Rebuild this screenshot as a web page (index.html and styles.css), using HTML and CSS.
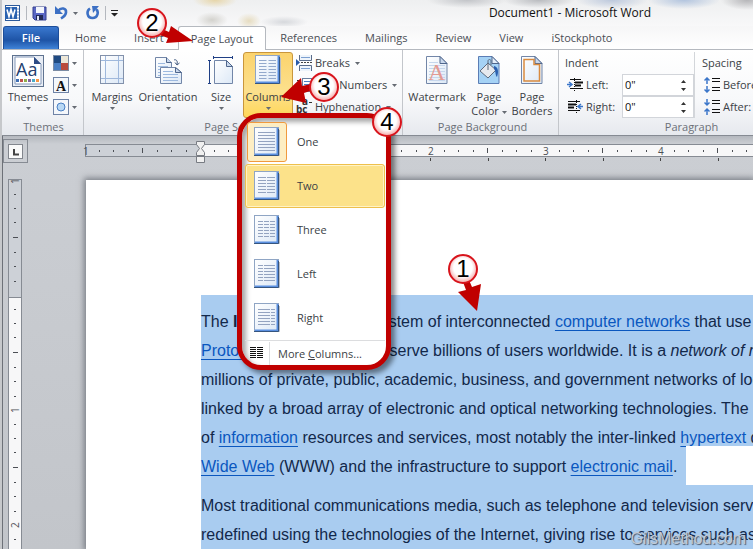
FILE: index.html
```html
<!DOCTYPE html>
<html lang="en">

<head>
    <meta charset="UTF-8">
    <meta name="viewport" content="width=device-width, initial-scale=1.0">
    <title>Document1 - Microsoft Word</title>
    <link rel="stylesheet" href="styles.css">
</head>

<body>
    <!-- Shared icon shapes -->
    <svg class="defs" width="0" height="0" aria-hidden="true">
        <defs>
            <linearGradient id="paper" x1="0" y1="0" x2="1" y2="1">
                <stop offset="0" stop-color="#fff" />
                <stop offset="1" stop-color="#dce8f6" />
            </linearGradient>
            <radialGradient id="badge" cx="0.5" cy="0.45" r="0.55">
                <stop offset="0.6" stop-color="#fff" />
                <stop offset="1" stop-color="#f3a3a3" />
            </radialGradient>
            <symbol id="caret" viewBox="0 0 5 3">
                <path d="M0 0h5L2.500 3z" fill="#666b73" />
            </symbol>
            <symbol id="sheet" viewBox="0 0 26 30">
                <path d="M2 28.500H25.500V3" fill="none" stroke="#b9bdc4" />
                <rect x="0.500" y="0.500" width="24" height="28" fill="url(#paper)" stroke="#8fa5c4" />
                <path d="M1 27.500H23.500V1" fill="none" stroke="#5a8fe0" stroke-width="2" />
                <path d="M0 28.500H24.500V2" fill="none" stroke="#35557f" />
            </symbol>
            <symbol id="folded" viewBox="0 0 24 30">
                <path d="M1.500 1.500H15l7 7V28.500H1.500z" fill="url(#paper)" stroke="#7286a8" />
                <path d="M15 1.500v7h7z" fill="#c9d8ec" stroke="#4f668c" />
            </symbol>
        </defs>
    </svg>

    <div class="window">
        <header class="titlebar">
            <div class="quick-access">
                <svg width="17" height="17" viewBox="0 0 17 17">
                    <rect x="1.500" y="0.500" width="14" height="15" fill="#fff" stroke="#2c5a9b" />
                    <rect x="1" y="2" width="12" height="12" fill="#2a62b0" />
                    <path d="M3 4.500l2 7 2-7 2 7 2-7" fill="none" stroke="#fff" stroke-width="1.600" />
                    <path d="M13 4h2M13 7h2M13 10h2M13 13h2" stroke="#7a9acb" />
                </svg>
                <span class="divider"></span>
                <button type="button" aria-label="Save">
                    <svg width="15" height="15" viewBox="0 0 15 15">
                        <path d="M1 1h13v13H3l-2-2z" fill="#5a67c4" stroke="#34408f" />
                        <rect x="4" y="1" width="8" height="6" fill="#f2f5fc" />
                        <rect x="4" y="9" width="7" height="5" fill="#222a55" />
                        <rect x="5" y="10" width="2" height="4" fill="#dfe4f5" />
                    </svg>
                </button>
                <button type="button" class="undo" aria-label="Undo">
                    <svg width="13" height="14" viewBox="0 0 13 14">
                        <path d="M3 5C6 1 11.500 2 11 6.500c-.300 3-2.500 4.500-5 6" fill="none" stroke="#3c70c4" stroke-width="2.600" />
                        <path d="M0 0v8h8z" fill="#3c70c4" />
                    </svg>
                    <svg width="5" height="3"><use href="#caret" /></svg>
                </button>
                <button type="button" aria-label="Repeat">
                    <svg width="14" height="14" viewBox="0 0 14 14">
                        <path d="M4 2.500C0 5 1 12 6.500 12S13 5 10 3.500" fill="none" stroke="#3c70c4" stroke-width="2.600" />
                        <path d="M6 0h7L7 7z" fill="#3c70c4" />
                    </svg>
                </button>
                <span class="divider"></span>
                <button type="button" aria-label="Customize Quick Access Toolbar">
                    <svg width="7" height="7" viewBox="0 0 7 7"><path d="M0 0h7v1H0zM0 3h7L3.500 6.500z" fill="#222" /></svg>
                </button>
            </div>
            <h1 class="title">Document1 - Microsoft Word</h1>
        </header>

        <nav class="tabs">
            <button type="button" class="tab file">File</button>
            <button type="button" class="tab">Home</button>
            <button type="button" class="tab">Insert</button>
            <button type="button" class="tab active">Page Layout</button>
            <button type="button" class="tab">References</button>
            <button type="button" class="tab">Mailings</button>
            <button type="button" class="tab">Review</button>
            <button type="button" class="tab">View</button>
            <button type="button" class="tab">iStockphoto</button>
        </nav>

        <div class="ribbon">
            <!-- Themes -->
            <section class="group themes">
                <div class="group-body">
                    <button type="button" class="big">
                        <svg width="32" height="32" viewBox="0 0 32 32">
                            <rect x="0.500" y="0.500" width="31" height="31" fill="#e8edf5" stroke="#5f7390" />
                            <path d="M3 2h19l7 7v20H3z" fill="#fff" stroke="#8498b8" />
                            <path d="M22 2v7h7z" fill="#2d4c86" />
                            <text x="4" y="21" class="aa">Aa</text>
                            <path d="M4 24h3v3H4z" fill="#3f6fb5" />
                            <path d="M8 24h3v3H8z" fill="#c0504d" />
                            <path d="M12 24h3v3h-3z" fill="#8fae4b" />
                            <path d="M16 24h3v3h-3z" fill="#7f63a1" />
                            <path d="M20 24h3v3h-3z" fill="#4bacc6" />
                            <path d="M24 24h3v3h-3z" fill="#f79646" />
                        </svg>
                        <span>Themes</span>
                        <svg width="5" height="3"><use href="#caret" /></svg>
                    </button>
                    <div class="stack">
                        <button type="button" class="small" aria-label="Theme Colors">
                            <svg width="16" height="16" viewBox="0 0 16 16">
                                <rect width="16" height="16" fill="#7b8ba3" />
                                <path d="M1 1h7v7H1z" fill="#1f4a82" /><path d="M8 1h7v7H8z" fill="#ece7d8" />
                                <path d="M1 8h7v7H1z" fill="#4a7fc4" /><path d="M8 8h7v7H8z" fill="#b94a3c" />
                            </svg>
                            <svg width="5" height="3"><use href="#caret" /></svg>
                        </button>
                        <button type="button" class="small" aria-label="Theme Fonts">
                            <svg width="16" height="16" viewBox="0 0 16 16">
                                <rect x="0.500" y="0.500" width="15" height="15" fill="#f4f7fb" stroke="#6f83a6" />
                                <text x="3" y="14" class="letter">A</text>
                            </svg>
                            <svg width="5" height="3"><use href="#caret" /></svg>
                        </button>
                        <button type="button" class="small" aria-label="Theme Effects">
                            <svg width="16" height="16" viewBox="0 0 16 16">
                                <rect x="0.500" y="0.500" width="15" height="15" fill="#f4f7fb" stroke="#6f83a6" />
                                <circle cx="8" cy="8" r="4" fill="#b8d8f5" stroke="#4a7fc4" />
                            </svg>
                            <svg width="5" height="3"><use href="#caret" /></svg>
                        </button>
                    </div>
                </div>
                <h2>Themes</h2>
            </section>

            <!-- Page Setup -->
            <section class="group setup">
                <div class="group-body">
                    <button type="button" class="big margins">
                        <svg width="24" height="30" viewBox="0 0 24 30">
                            <rect x="0.500" y="0.500" width="23" height="28" fill="url(#paper)" stroke="#8291ab" />
                            <path d="M5.500 1v27M18.500 1v27M1 5.500h22M1 23.500h22" stroke="#9fb8dc" />
                        </svg>
                        <span>Margins</span>
                        <svg width="5" height="3"><use href="#caret" /></svg>
                    </button>
                    <button type="button" class="big orientation">
                        <svg width="28" height="30" viewBox="0 0 28 30">
                            <path d="M1.500 2.500h11l5 5v15h-16z" fill="url(#paper)" stroke="#7286a8" />
                            <path d="M12.500 2.500v5h5" fill="#c9d8ec" stroke="#4f668c" />
                            <path d="M4 8.500h7M4 11.500h10M4 14.500h3M4 17.500h3M4 20.500h3" stroke="#9db9df" />
                            <path d="M6.500 12.500h15l6 5v11h-21z" fill="url(#paper)" stroke="#7286a8" />
                            <path d="M21.500 12.500v5h6z" fill="#c9d8ec" stroke="#4f668c" />
                            <path d="M9 16.500h10M9 19.500h15M9 22.500h15M9 25.500h15" stroke="#9db9df" />
                            <path d="M20 5c2-1 4 1 3 4M21 7.500l2 2.500 2.500-2" fill="none" stroke="#41597f" />
                        </svg>
                        <span>Orientation</span>
                        <svg width="5" height="3"><use href="#caret" /></svg>
                    </button>
                    <button type="button" class="big size">
                        <svg width="26" height="30" viewBox="0 0 26 30">
                            <path d="M6.500 5.500h12l6 6v17h-18z" fill="url(#paper)" stroke="#7286a8" />
                            <path d="M18.500 5.500v6h6z" fill="#c9d8ec" stroke="#4f668c" />
                            <path d="M6 2.500h18M5.500 1v3M24.500 1v3M1.500 6v22M0 5.500h3M0 28.500h3" stroke="#1f3f85" />
                        </svg>
                        <span>Size</span>
                        <svg width="5" height="3"><use href="#caret" /></svg>
                    </button>
                    <div class="columns-control">
                        <button type="button" class="big pressed">
                            <svg width="26" height="30" viewBox="0 0 26 30">
                                <use href="#sheet" />
                                <path d="M4 5.500h7.500M4 8.500h7.500M4 11.500h7.500M4 14.500h7.500M4 17.500h7.500M4 20.500h7.500M4 23.500h7.500M13.500 5.500H21M13.500 8.500H21M13.500 11.500H21M13.500 14.500H21M13.500 17.500H21M13.500 20.500H21M13.500 23.500H21" stroke="#93a9cc" />
                            </svg>
                            <span>Columns</span>
                            <svg width="5" height="3"><use href="#caret" /></svg>
                        </button>

                        <!-- Columns drop-down -->
                        <div class="menu">
                            <button type="button" class="menu-item current">
                                <span class="thumb"><svg width="26" height="30" viewBox="0 0 26 30">
                                    <use href="#sheet" />
                                    <path d="M4 5.500h17M4 8.500h17M4 11.500h17M4 14.500h17M4 17.500h17M4 20.500h17M4 23.500h17" />
                                </svg></span>One
                            </button>
                            <button type="button" class="menu-item hover">
                                <span class="thumb"><svg width="26" height="30" viewBox="0 0 26 30">
                                    <use href="#sheet" />
                                    <path d="M4 6.500h8M4 9.500h8M4 12.500h8M4 15.500h8M4 18.500h8M4 21.500h8M13 6.500h8M13 9.500h8M13 12.500h8M13 15.500h8M13 18.500h8M13 21.500h8" />
                                </svg></span>Two
                            </button>
                            <button type="button" class="menu-item">
                                <span class="thumb"><svg width="26" height="30" viewBox="0 0 26 30">
                                    <use href="#sheet" />
                                    <path d="M4 6.500h17M4 9.500h17M4 12.500h17M4 15.500h17M4 18.500h17M4 21.500h17" stroke-dasharray="5 1" />
                                </svg></span>Three
                            </button>
                            <button type="button" class="menu-item">
                                <span class="thumb"><svg width="26" height="30" viewBox="0 0 26 30">
                                    <use href="#sheet" />
                                    <path d="M4 6.500h5M4 9.500h5M4 12.500h5M4 15.500h5M4 18.500h5M4 21.500h5M10 6.500h11M10 9.500h11M10 12.500h11M10 15.500h11M10 18.500h11M10 21.500h11" />
                                </svg></span>Left
                            </button>
                            <button type="button" class="menu-item">
                                <span class="thumb"><svg width="26" height="30" viewBox="0 0 26 30">
                                    <use href="#sheet" />
                                    <path d="M4 6.500h12M4 9.500h12M4 12.500h12M4 15.500h12M4 18.500h12M4 21.500h12M17 6.500h4M17 9.500h4M17 12.500h4M17 15.500h4M17 18.500h4M17 21.500h4" />
                                </svg></span>Right
                            </button>
                            <button type="button" class="menu-more">
                                <svg width="13" height="12" viewBox="0 0 13 12">
                                    <path d="M0 .500h6M0 2.500h6M0 4.500h6M0 6.500h6M0 8.500h6M0 10.500h6M7 .500h6M7 2.500h6M7 4.500h6M7 6.500h6M7 8.500h6M7 10.500h6" stroke="#111" />
                                </svg>
                                <span>More <u>C</u>olumns...</span>
                            </button>
                        </div>
                    </div>
                    <div class="stack">
                        <button type="button" class="small">
                            <svg width="16" height="16" viewBox="0 0 16 16">
                                <path d="M3.500 0v5.500h12V0M3.500 16V10.500h12V16" fill="#eef4fb" stroke="#5a6c8a" />
                                <path d="M5 2.500h9M5 13.500h9" stroke="#7da0d0" />
                                <path d="M0 4l4 3.500L0 11z" fill="#2a5aa8" /><path d="M5 7.500h11" stroke="#444" stroke-dasharray="2 1" />
                            </svg>
                            <span>Breaks</span>
                            <svg width="5" height="3"><use href="#caret" /></svg>
                        </button>
                        <button type="button" class="small">
                            <svg width="16" height="16" viewBox="0 0 16 16">
                                <rect x="6.500" y="1.500" width="9" height="13" fill="#fff" stroke="#6b7f9f" />
                                <path d="M8 4.500h6M8 7.500h6M8 10.500h6" stroke="#4a7fc4" />
                                <path d="M1 3.500h4M1 7.500h4M1 11.500h4" stroke="#333" />
                            </svg>
                            <span>Line Numbers</span>
                            <svg width="5" height="3"><use href="#caret" /></svg>
                        </button>
                        <button type="button" class="small">
                            <svg width="16" height="16" viewBox="0 0 16 16">
                                <text x="0" y="14" class="hyphen">bc</text>
                                <text x="6" y="6" class="hyphen">a</text>
                                <path d="M13 3.500h3" stroke="#333" />
                            </svg>
                            <span>Hyphenation</span>
                            <svg width="5" height="3"><use href="#caret" /></svg>
                        </button>
                    </div>
                </div>
                <h2>Page Setup</h2>
            </section>

            <!-- Page Background -->
            <section class="group background">
                <div class="group-body">
                    <button type="button" class="big watermark">
                        <svg width="24" height="30" viewBox="0 0 24 30">
                            <use href="#folded" />
                            <path d="M4 7.500h9M4 10.500h16M4 13.500h16M4 16.500h16M4 19.500h16M4 22.500h16M4 25.500h16" stroke="#c5d6ec" />
                            <text x="3" y="25" class="mark">A</text>
                        </svg>
                        <span>Watermark</span>
                        <svg width="5" height="3"><use href="#caret" /></svg>
                    </button>
                    <button type="button" class="big color">
                        <svg width="24" height="30" viewBox="0 0 24 30">
                            <path d="M1.500 1.500H15l7 7V28.500H1.500z" fill="#a5d2f5" stroke="#5b7db5" />
                            <path d="M15 1.500v7h7z" fill="#e3edf8" stroke="#4f668c" />
                            <path d="M3 16l8-8 8 7-8 8z" fill="#e6e9ee" stroke="#5d6a7d" />
                            <path d="M11 15V6c0-2 3-2 3 0v4" fill="none" stroke="#5d6a7d" />
                            <path d="M17 11c4 1 5 5 3 11-2-2-1-6-3-8z" fill="#2b5fae" />
                        </svg>
                        <span>Page<br>Color <svg width="5" height="3"><use href="#caret" /></svg></span>
                    </button>
                    <button type="button" class="big borders">
                        <svg width="24" height="30" viewBox="0 0 24 30">
                            <use href="#folded" />
                            <path d="M4 4.500h10v5h5.500v16.500H4z" fill="none" stroke="#d98b3f" stroke-width="1.500" />
                        </svg>
                        <span>Page<br>Borders</span>
                    </button>
                </div>
                <h2>Page Background</h2>
            </section>

            <!-- Paragraph -->
            <section class="group paragraph">
                <div class="group-body">
                    <div class="fields">
                        <h3>Indent</h3>
                        <div class="field">
                            <svg width="16" height="14" viewBox="0 0 16 14">
                                <path d="M3 1.500h11M8 4.500h8M8 7.500h6M3 10.500h13" stroke="#111" />
                                <path d="M8 4.500h8M8 7.500h6" stroke="#111" stroke-width="2" />
                                <path d="M7.500 0v14" stroke="#111" stroke-dasharray="1 1" />
                                <path d="M0 6.500h4M2 4l3 2.500L2 9" fill="none" stroke="#3b76c9" stroke-width="1.500" />
                            </svg>
                            <label for="indent-left">Left:</label>
                            <span class="spinner"><input type="text" id="indent-left" value='0"'><svg width="5" height="11" viewBox="0 0 5 11"><path d="M0 3h5L2.500 0zM0 8h5l-2.500 3z" fill="#333" /></svg></span>
                        </div>
                        <div class="field">
                            <svg width="16" height="14" viewBox="0 0 16 14">
                                <path d="M1 1.500h12M1 10.500h12" stroke="#111" />
                                <path d="M1 4.500h8M1 7.500h6" stroke="#111" stroke-width="2" />
                                <path d="M9.500 0v14" stroke="#111" stroke-dasharray="1 1" />
                                <path d="M16 6.500h-4M14 4l-3 2.500L14 9" fill="none" stroke="#3b76c9" stroke-width="1.500" />
                            </svg>
                            <label for="indent-right">Right:</label>
                            <span class="spinner"><input type="text" id="indent-right" value='0"'><svg width="5" height="11" viewBox="0 0 5 11"><path d="M0 3h5L2.500 0zM0 8h5l-2.500 3z" fill="#333" /></svg></span>
                        </div>
                    </div>
                    <div class="fields spacing">
                        <h3>Spacing</h3>
                        <div class="field">
                            <svg width="16" height="16" viewBox="0 0 16 16">
                                <path d="M8 1.500h8M8 4.500h8M8 10.500h8M8 13.500h8" stroke="#111" />
                                <path d="M3 7V1M.500 3.500L3 1l2.500 2.500M3 9v6M.500 12.500L3 15l2.500-2.500" fill="none" stroke="#3b76c9" stroke-width="1.500" />
                            </svg>
                            <label for="space-before">Before:</label>
                            <span class="spinner"><input type="text" id="space-before"></span>
                        </div>
                        <div class="field">
                            <svg width="16" height="16" viewBox="0 0 16 16">
                                <path d="M8 1.500h8M8 4.500h8M8 10.500h8M8 13.500h8" stroke="#111" />
                                <path d="M3 0v6M.500 3.500L3 6l2.500-2.500M3 16v-6M.500 12.500L3 10l2.500 2.500" fill="none" stroke="#3b76c9" stroke-width="1.500" />
                            </svg>
                            <label for="space-after">After:</label>
                            <span class="spinner"><input type="text" id="space-after"></span>
                        </div>
                    </div>
                </div>
                <h2>Paragraph</h2>
            </section>
        </div>

        <main class="workspace">
            <button type="button" class="tab-stop" aria-label="Left tab">
                <svg width="15" height="15" viewBox="0 0 15 15">
                    <rect x="0.500" y="0.500" width="14" height="14" fill="#fafafa" stroke="#82868d" />
                    <path d="M6 5v5.500h5" fill="none" stroke="#444" stroke-width="2" />
                </svg>
            </button>

            <div class="ruler-h">
                <svg width="100%" height="22">
                    <defs>
                        <pattern id="ticks-h" width="115" height="14" patternUnits="userSpaceOnUse" x="115">
                            <path d="M14.500 6v2M28.500 6v2M43.500 6v2M57.500 4v5M72.500 6v2M86.500 6v2M101.500 6v2" stroke="#4c4f55" />
                        </pattern>
                        <pattern id="stops" width="115" height="22" patternUnits="userSpaceOnUse" x="115">
                            <path d="M.500 14v3M58.500 14v3" stroke="#444" />
                        </pattern>
                    </defs>
                    <rect width="100%" height="13" fill="#f7f7f8" />
                    <rect width="116" height="13" fill="#cdd1d7" />
                    <rect x="1" width="100%" height="13" fill="url(#ticks-h)" />
                    <path d="M0 0h2000v1H0zM0 12h2000v1H0zM0 0h1v13H0z" fill="#868b93" />
                    <rect x="150" y="14" width="100%" height="5" fill="url(#stops)" />
                    <text x="-2" y="11">1</text>
                    <text x="227" y="11">1</text>
                    <text x="343" y="11">2</text>
                    <text x="458" y="11">3</text>
                    <text x="573" y="11">4</text>
                </svg>
                <svg class="indent-marker" width="9" height="22" viewBox="0 0 9 22">
                    <path d="M.500 .500h8v3l-3 4 3 4v3h-8v-3l3-4-3-4z" fill="#f0f0f0" stroke="#777b82" />
                    <path d="M.500 15.500h8v6h-8z" fill="#f0f0f0" stroke="#777b82" />
                </svg>
            </div>

            <div class="ruler-v">
                <svg width="14" height="100%">
                    <defs>
                        <pattern id="ticks-v" width="14" height="115" patternUnits="userSpaceOnUse" y="1">
                            <path d="M6 14.500h2M6 28.500h2M6 42.500h2M5 57.500h5M6 72.500h2M6 86.500h2M6 101.500h2" stroke="#4c4f55" />
                        </pattern>
                    </defs>
                    <rect width="14" height="100%" fill="#f7f7f8" />
                    <rect width="14" height="119" fill="#cdd1d7" />
                    <rect width="14" height="100%" fill="url(#ticks-v)" />
                    <path d="M0 0h14v1H0zM0 118h14v1H0zM0 0h1v900H0zM13 0h1v900h-1z" fill="#868b93" />
                    <text transform="translate(11 5) rotate(-90)">1</text>
                    <text transform="translate(11 234) rotate(-90)">1</text>
                    <text transform="translate(11 349) rotate(-90)">2</text>
                </svg>
            </div>

            <article class="page">
                <div class="selection">
                    <p>The <b>Internet</b> is a global system of interconnected <a href="#networks">computer networks</a> that use<br>
                        <a href="#suite">Protocol Suite</a> (TCP/IP) to serve billions of users worldwide. It is a <i>network of networks</i><br>
                        millions of private, public, academic, business, and government networks of local<br>
                        linked by a broad array of electronic and optical networking technologies. The<br>
                        of <a href="#information">information</a> resources and services, most notably the inter-linked <a href="#hypertext">hypertext</a> documents<br>
                        <span class="last-line"><span><a href="#web">Wide Web</a> (WWW) and the infrastructure to support <a href="#mail">electronic mail</a>.</span></span></p>
                    <p>Most traditional communications media, such as telephone and television services<br>
                        redefined using the technologies of the Internet, giving rise to services such as</p>
                </div>
            </article>
        </main>

        <div class="credit">GilsMethod.com</div>

        <!-- Numbered callouts -->
        <svg class="callouts" width="700" height="400" viewBox="0 0 700 400" aria-hidden="true">
            <g fill="#c00000">
                <path d="M193 41l-22-15-2 6-9-4-3 6 11 4-2 5z" />
                <path d="M281 97l20-19 1 8 9-2 2 6-9 3 2 10z" />
                <path d="M477 311l-19-19 8-2-3-8 6-2 3 7 9-3z" />
            </g>
            <g fill="url(#badge)" stroke="#d8141c" stroke-width="2">
                <circle cx="152" cy="23" r="14" />
                <circle cx="324" cy="87" r="14" />
                <circle cx="387" cy="122" r="14" />
                <circle cx="463" cy="269" r="14" />
            </g>
            <g class="digits">
                <text x="152" y="31">2</text>
                <text x="324" y="95">3</text>
                <text x="387" y="130">4</text>
                <text x="463" y="277">1</text>
            </g>
        </svg>
    </div>
</body>

</html>
```
FILE: styles.css
```css
:root {
    --ui-font: "Open Sans", "Noto Sans", sans-serif;
    --doc-font: "Liberation Sans", Arial, sans-serif;
    --ui-text: #3b3f46;
    --muted: #6b7078;
    --line: #868b93;
    --annotation: #c00000;
}

* {
    box-sizing: border-box;
}

body {
    margin: 0;
    font-family: var(--ui-font);
    font-size: 11px;
    line-height: 14px;
    color: var(--ui-text);
    overflow: hidden;
}

h1, h2, h3, p {
    margin: 0;
    font-size: inherit;
    font-weight: normal;
}

button {
    font: inherit;
    color: inherit;
    background: none;
    border: 0;
    padding: 0;
    white-space: nowrap;
}

svg {
    display: block;
    flex: none;
}

.defs {
    position: absolute;
}

.window {
    position: relative;
    display: flex;
    flex-direction: column;
    height: 100vh;
    border-left: 2px solid #c6c8cb;
    overflow: hidden;
}

/* Title bar */
.titlebar {
    display: flex;
    align-items: center;
    height: 26px;
    flex: none;
    padding-left: 2px;
    background:
        radial-gradient(ellipse 22px 8px at 213px 0, #e6d5a8, transparent),
        radial-gradient(ellipse 16px 8px at 210px 20px, #d3d2cd, transparent),
        radial-gradient(ellipse 12px 8px at 247px 21px, #e6dcc0, transparent),
        radial-gradient(ellipse 24px 6px at 282px 22px, #d6d8dc, transparent),
        radial-gradient(ellipse 40px 8px at 465px 0, #c2c4c8, transparent),
        radial-gradient(ellipse 36px 8px at 537px 0, #b9bbbf, transparent),
        radial-gradient(ellipse 36px 9px at 610px 0, #bcc8dc, transparent),
        radial-gradient(ellipse 36px 9px at 682px 0, #b2c4de, transparent),
        radial-gradient(ellipse 26px 10px at 745px 0, #b5b5b8, transparent),
        linear-gradient(#eeeff0, #f8f8f9);
}

.quick-access {
    display: flex;
    align-items: center;
    gap: 5px;
}

.divider {
    width: 1px;
    height: 14px;
    background: #b4b8be;
}

.undo {
    display: flex;
    align-items: center;
    gap: 5px;
    margin: 0 3px;
}

.title {
    margin-left: auto;
    margin-right: 102px;
    font-size: 12px;
    color: #111;
}

/* Ribbon tabs */
.tabs {
    display: flex;
    height: 24px;
    flex: none;
    padding-left: 1px;
    background: linear-gradient(#f6f6f7, #fff);
    border-bottom: 1px solid #b5b9bf;
}

.tab {
    padding: 0 14px;
    color: #4a4e55;
}

.tab.file {
    width: 56px;
    margin-right: 2px;
    color: #fff;
    font-weight: 600;
    background: linear-gradient(#3a78cf, #1e54a6 60%, #3f83d8);
    border: 1px solid #1d4e9a;
    border-bottom: 0;
    border-radius: 3px 3px 0 0;
}

.tab.active {
    padding: 0 12px;
    margin-bottom: -1px;
    background: #fff;
    border: 1px solid #b5b9bf;
    border-bottom: 0;
    border-radius: 3px 3px 0 0;
}

/* Ribbon */
.ribbon {
    display: flex;
    height: 86px;
    flex: none;
    background: linear-gradient(#fff, #f7f8fa 60%, #e6e9ee);
    border-bottom: 1px solid var(--line);
}

.group {
    display: flex;
    flex-direction: column;
    flex: none;
    padding-top: 2px;
    border-right: 1px solid #c3c6cb;
}

.group h2 {
    padding-top: 2px;
    text-align: center;
    color: var(--muted);
}

.group-body {
    display: flex;
    height: 66px;
}

.themes {
    width: 82px;
    padding-left: 2px;
}

.setup {
    width: 319px;
    padding-left: 4px;
}

.setup h2 {
    padding-right: 24px;
}

.background {
    width: 156px;
    padding-left: 4px;
}

.paragraph {
    flex: 1;
    min-width: 260px;
    padding-left: 6px;
}

.big {
    display: flex;
    flex-direction: column;
    align-items: center;
    width: 48px;
    height: 66px;
    padding-top: 3px;
}

.big > svg:first-child {
    margin-bottom: 5px;
}

.big span + svg {
    margin-top: 3px;
}

.big span svg {
    display: inline-block;
    vertical-align: middle;
}

.themes .big > svg:first-child {
    margin-bottom: 3px;
}

.themes .stack {
    padding-left: 1px;
}

.big span {
    line-height: 14px;
}

.orientation {
    width: 64px;
}

.size {
    width: 42px;
}

.watermark {
    width: 60px;
}

.color {
    width: 44px;
}

.borders {
    width: 42px;
}

.columns-control {
    position: relative;
    margin-left: 1px;
}

.pressed {
    width: 50px;
    padding-top: 2px;
    background: linear-gradient(#fbd36d, #fce08d 60%, #ffd75a);
    border: 1px solid #c9963c;
    border-radius: 3px;
}

.stack {
    display: flex;
    flex-direction: column;
    padding-left: 3px;
}

.small {
    display: flex;
    align-items: center;
    gap: 3px;
    height: 22px;
}

.small span {
    margin-right: 2px;
}

/* Paragraph fields */
.fields {
    width: 133px;
    border-right: 1px solid #d3d6da;
}

.fields.spacing {
    padding-left: 7px;
    border-right: 0;
}

.fields h3 {
    height: 22px;
    line-height: 22px;
}

.field {
    display: flex;
    align-items: center;
    height: 22px;
    padding-left: 2px;
    gap: 3px;
}

.field label {
    width: 33px;
}

.spinner {
    display: flex;
    align-items: center;
    width: 72px;
    height: 22px;
    padding-right: 7px;
    background: #fff;
    border: 1px solid #d2d5da;
}

.spinner input {
    flex: 1;
    min-width: 0;
    padding: 0 2px;
    border: 0;
    background: none;
    font: inherit;
    color: #111;
}

.spacing .field label {
    width: 42px;
}

/* Columns menu */
.menu {
    position: absolute;
    top: 61px;
    left: -6px;
    z-index: 2;
    width: 154px;
    padding: 2px 1px 0 3px;
    background: #fff;
    border: 5px solid var(--annotation);
    border-radius: 24px;
    box-shadow: 4px 4px 5px rgba(0, 0, 0, 0.45), inset 4px 4px 5px rgba(0, 0, 0, 0.35);
}

.menu-item {
    display: flex;
    align-items: center;
    gap: 10px;
    width: 100%;
    height: 44px;
    padding-left: 1px;
    border: 1px solid transparent;
    border-radius: 3px;
}

.thumb {
    display: flex;
    align-items: center;
    justify-content: center;
    width: 40px;
    height: 40px;
    border: 1px solid transparent;
    border-radius: 3px;
}

.thumb path {
    stroke: #93a3c0;
}

.current .thumb {
    background: #fdeec3;
    border-color: #f09a3e;
}

.hover {
    background: #fce28a;
    border-color: #eec04c;
    box-shadow: inset 0 0 0 1px #fff3c6;
}

.menu-more {
    display: flex;
    align-items: center;
    width: 100%;
    height: 25px;
    padding-left: 5px;
    gap: 6px;
    border-top: 1px solid #dcdddf;
}

.menu-more span {
    padding-left: 8px;
    line-height: 23px;
    border-left: 1px solid #dcdddf;
}

/* Document area */
.workspace {
    display: grid;
    grid-template-columns: 25px 1fr;
    grid-template-rows: 43px 1fr;
    flex: 1;
    min-height: 0;
    background: linear-gradient(#b4b8be, #cbced3 8px, #cacdd2 60px, #c2c5ca);
    border-left: 1px solid #6d7178;
}

.tab-stop {
    display: flex;
    align-items: center;
    justify-content: center;
    align-self: start;
    height: 24px;
    margin-top: 3px;
    border: 1px solid var(--line);
}

.ruler-h {
    position: relative;
    padding: 8px 0 0 57px;
    overflow: hidden;
}

.ruler-h > svg {
    overflow: visible;
}

.indent-marker {
    position: absolute;
    left: 168px;
    top: 5px;
}

.ruler-h text,
.ruler-v text {
    font-family: var(--ui-font);
    font-size: 10px;
    fill: #4c4f55;
}

.ruler-v {
    padding-left: 5px;
    overflow: hidden;
}

.page {
    margin: 1px 0 0 58px;
    padding: 115px 0 0 115px;
    background: #fff;
    box-shadow: 0 0 6px 2px rgba(70, 75, 84, 0.6);
    overflow: hidden;
}

.selection {
    height: 100%;
    padding-top: 12px;
    background: #a9ccf0;
    font-family: var(--doc-font);
    font-size: 16px;
    line-height: 29px;
    color: #12284a;
    white-space: nowrap;
}

.selection p + p {
    margin-top: 10px;
}

.selection a {
    color: #0a57bf;
    text-underline-offset: 3px;
}

/* Unselected strip after the paragraph's end */
.last-line {
    display: flex;
}

.last-line::after {
    content: "";
    flex: 1;
    margin: -6px 0 -4px 9px;
    background: #fff;
}

.credit {
    position: absolute;
    right: 7px;
    bottom: 0;
    font-family: var(--doc-font);
    font-size: 16px;
    line-height: 20px;
    color: #c3cad3;
    text-shadow: 1px 1px 1px #4c5a6c;
}

.callouts {
    position: absolute;
    top: 0;
    left: -2px;
    z-index: 3;
    pointer-events: none;
}

.digits {
    font-family: var(--doc-font);
    font-size: 24px;
    text-anchor: middle;
    fill: #000;
}

/* Icon lettering */
.aa {
    font-size: 18px;
    fill: #24406f;
}

.letter {
    font-family: "Liberation Serif", serif;
    font-size: 14px;
    font-weight: bold;
    fill: #111;
}

.hyphen {
    font-size: 10px;
    font-weight: bold;
    fill: #333;
}

.mark {
    font-family: "Liberation Serif", serif;
    font-size: 24px;
    fill: #e39a93;
}
```
